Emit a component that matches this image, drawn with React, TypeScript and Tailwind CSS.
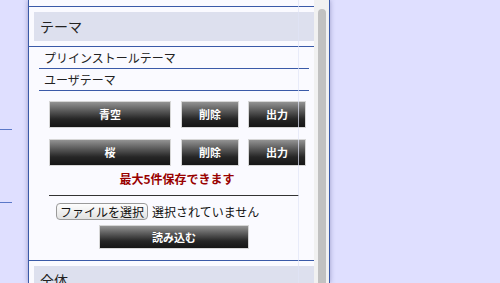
import React from "react";

// 設定パネル: テーマ管理セクション
const THEMES = ["青空", "桜"];

function DarkButton({ label, className }: { label: string; className: string }) {
  return (
    <button
      type="button"
      className={`flex items-center justify-center border border-[#d6d6d6] bg-[linear-gradient(to_bottom,#939393_0%,#5a5a5a_35%,#262626_68%,#161616_100%)] text-[11px] font-bold leading-none text-white ${className}`}
    >
      {label}
    </button>
  );
}

function SectionHeader({ title }: { title: string }) {
  return (
    <div className="pl-[5px] pt-[5px] pb-[5px]">
      <div className="flex h-[29px] items-center bg-[#dde0ee] pl-[6px] text-[14px] text-[#222]">{title}</div>
    </div>
  );
}

export default function App() {
  return (
    <div className="flex h-[283px] w-[500px] overflow-hidden bg-[#dfdfff] font-['Noto_Sans_CJK_JP','Noto_Sans',sans-serif]">
      <div className="w-[28px] shrink-0">
        <div className="mt-[129px] h-px w-[12px] bg-[#5b78c8]" />
        <div className="mt-[72px] h-px w-[12px] bg-[#5b78c8]" />
      </div>

      <div className="flex h-[283px] w-[302px] shrink-0 border-x border-[#3a5aa8] bg-[#fafaff] shadow-[0_0_5px_rgba(70,70,130,0.45)]">
        <div className="relative w-[285px] shrink-0">
          <div className="h-[6px]" />
          <div className="border-t border-[#3a5aa8]">
            <SectionHeader title="テーマ" />
          </div>

          <div className="border-t border-[#3a5aa8] pb-[11px]">
            <div className="ml-[10px] mr-[5px]">
              <div className="flex h-[22px] items-center border-b border-[#3a5aa8] pl-[5px] text-[12px] text-[#222]">
                プリインストールテーマ
              </div>
              <div className="flex h-[22px] items-center border-b border-[#3a5aa8] pl-[5px] text-[12px] text-[#222]">
                ユーザテーマ
              </div>
            </div>

            <div className="ml-[20px] mt-[10px] flex flex-col gap-[11px]">
              {THEMES.map((t) => (
                <div key={t} className="flex h-[27px]">
                  <DarkButton label={t} className="w-[122px]" />
                  <DarkButton label="削除" className="ml-[10px] w-[58px]" />
                  <DarkButton label="出力" className="ml-[9px] w-[58px]" />
                </div>
              ))}
            </div>

            <div className="ml-[20px] mt-[4px] w-[256px] text-center text-[12px] font-bold leading-[17px] text-[#990000]">
              最大5件保存できます
            </div>
            <div className="ml-[20px] mt-[8px] w-[250px] border-t border-[#333]" />
            <div className="ml-[27px] mt-[7px] flex h-[17px] items-center gap-[4px] text-[12px] text-[#111]">
              <button
                type="button"
                className="flex h-[17px] items-center rounded-[4px] border border-[#9a9a9a] bg-[linear-gradient(to_bottom,#fdfdfd,#e2e2e2)] px-[3px] text-[12px] leading-none text-[#111]"
              >
                ファイルを選択
              </button>
              <span>選択されていません</span>
            </div>
            <DarkButton label="読み込む" className="ml-[70px] mt-[5px] h-[24px] w-[150px]" />
          </div>

          <div className="border-t border-[#3a5aa8]">
            <SectionHeader title="全体" />
          </div>

          <div className="pointer-events-none absolute left-[269px] top-0 h-full w-px bg-[#dfe4f6] opacity-70" />
        </div>

        <div className="w-[15px] shrink-0 bg-[#f1f1f1] pl-[4px] pt-[9px]">
          <div className="h-full w-[8px] rounded-t-full bg-[#c1c1c1]" />
        </div>
      </div>
    </div>
  );
}
